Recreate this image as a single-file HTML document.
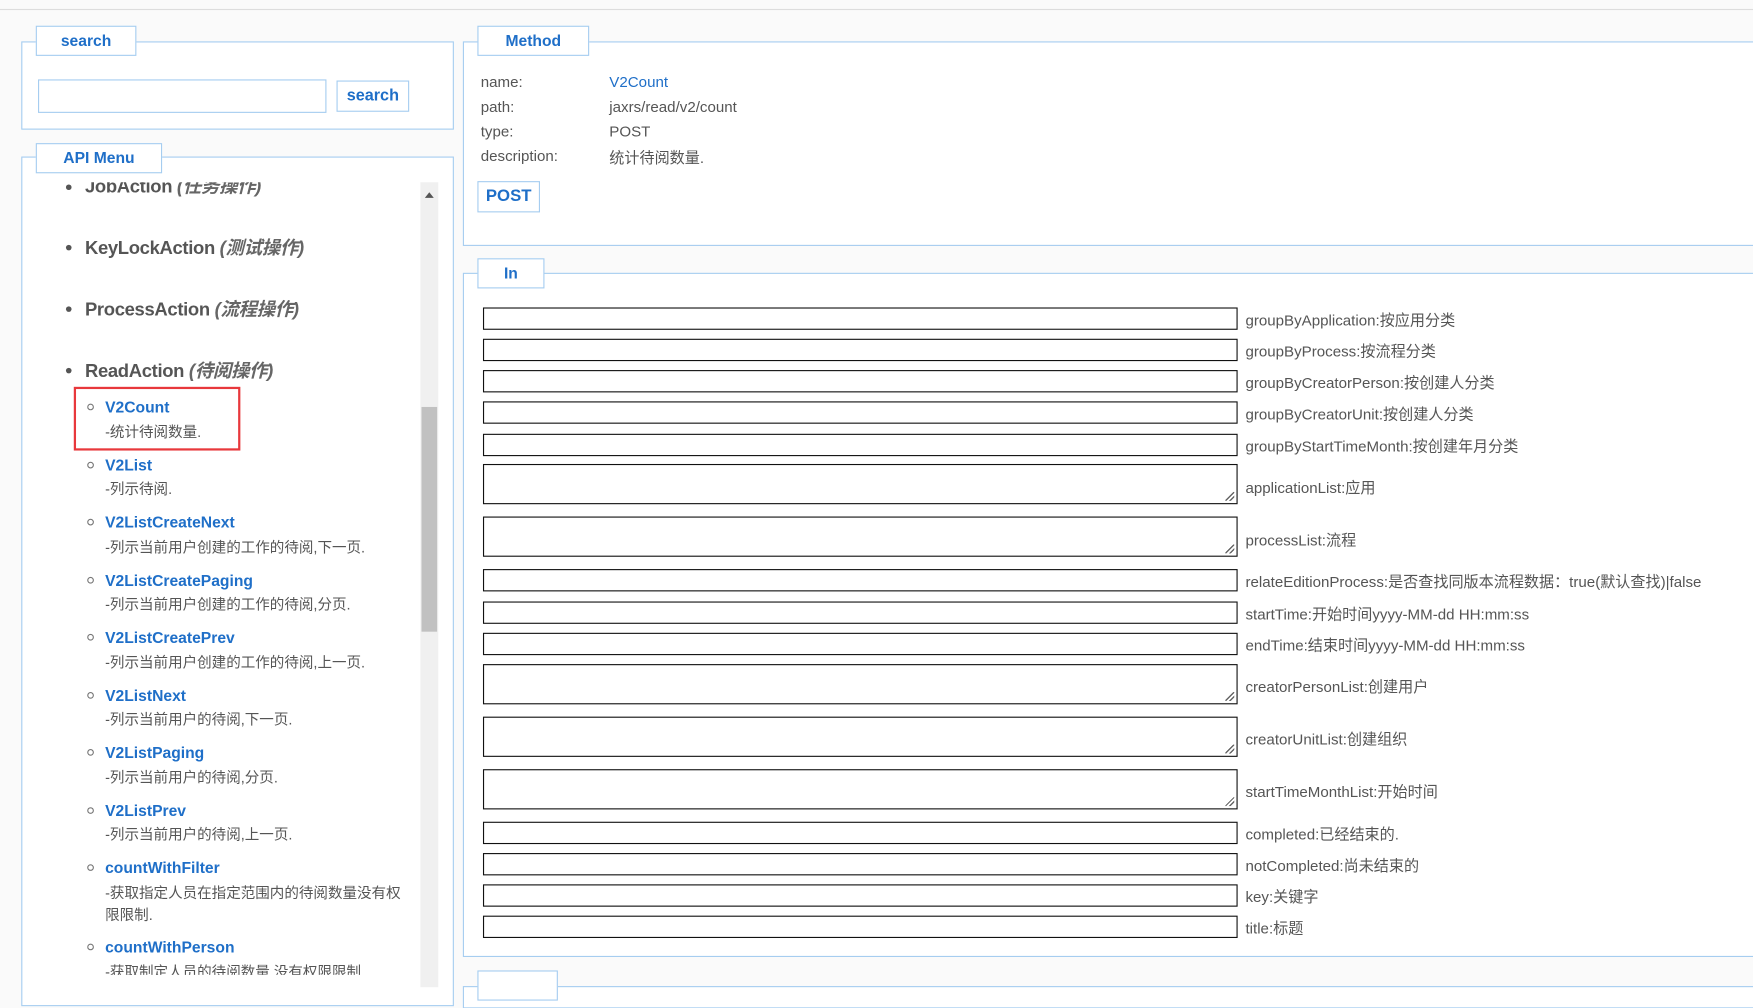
<!DOCTYPE html>
<html><head><meta charset="utf-8"><style>
html,body{margin:0;padding:0;width:1753px;height:975px;overflow:hidden;background:#fafafa}
#w{position:absolute;left:0;top:0;width:1568px;height:872px;transform:scale(1.118);transform-origin:0 0;font-family:"Liberation Sans","Noto Sans CJK SC",sans-serif;color:#555}
.a{position:absolute;box-sizing:border-box}
.fs{border:1px solid #a6cdf0;background:#fff}
.lg{border:1px solid #a6cdf0;background:#fff;color:#1f6fc8;font-weight:bold;font-size:14px;text-align:center;line-height:24px}
.t{position:absolute;white-space:nowrap}
.inp{position:absolute;left:432px;width:675px;border:1px solid #111;box-sizing:border-box;background:#fff}
.lab{position:absolute;left:1114px;font-size:13.5px;color:#555;white-space:nowrap}
.h{font-size:16.5px;font-weight:bold;color:#555;letter-spacing:-0.3px}
.h i{color:#666}
.dot{position:absolute;width:5px;height:5px;border-radius:50%;background:#555}
.cir{position:absolute;width:4px;height:4px;border-radius:50%;border:1px solid #777}
.lk{font-size:14px;font-weight:bold;color:#1f6fc8}
.ds{font-size:13px;color:#555}
.rz{position:absolute;right:2px;bottom:2px;width:8px;height:8px;background:linear-gradient(135deg,transparent 45%,#666 45%,#666 55%,transparent 55%,transparent 70%,#666 70%,#666 80%,transparent 80%)}
</style></head><body><div id="w">
<div class="a" style="left:0;top:8px;width:1568px;height:1px;background:#ddd"></div>

<div class="a fs" style="left:19px;top:37px;width:387px;height:79px"></div>
<div class="a lg" style="left:32px;top:23px;width:90px;height:27px">search</div>
<div class="a" style="left:34px;top:71px;width:258px;height:30px;border:1px solid #a6cdf0;background:#fff"></div>
<div class="a lg" style="left:301px;top:72px;width:65px;height:28px;line-height:26px;font-size:14.5px">search</div>

<div class="a fs" style="left:19px;top:140px;width:387px;height:760px"></div>
<div class="a lg" style="left:32px;top:128px;width:113px;height:27px">API Menu</div>
<div class="a" style="left:22px;top:163px;width:352px;height:709px;overflow:hidden">
  <div class="dot" style="left:37px;top:2px"></div><div class="t h" style="left:54px;top:-10px">JobAction <i>(任务操作)</i></div>
  <div class="dot" style="left:37px;top:56px"></div><div class="t h" style="left:54px;top:45px">KeyLockAction <i>(测试操作)</i></div>
  <div class="dot" style="left:37px;top:111px"></div><div class="t h" style="left:54px;top:100px">ProcessAction <i>(流程操作)</i></div>
  <div class="dot" style="left:37px;top:166px"></div><div class="t h" style="left:54px;top:155px">ReadAction <i>(待阅操作)</i></div>
<div class="cir" style="left:56px;top:198px"></div><div class="t lk" style="left:72px;top:193px">V2Count</div><div class="t ds" style="left:72px;top:213px">-统计待阅数量.</div>
<div class="cir" style="left:56px;top:250px"></div><div class="t lk" style="left:72px;top:245px">V2List</div><div class="t ds" style="left:72px;top:264px">-列示待阅.</div>
<div class="cir" style="left:56px;top:301px"></div><div class="t lk" style="left:72px;top:296px">V2ListCreateNext</div><div class="t ds" style="left:72px;top:316px">-列示当前用户创建的工作的待阅,下一页.</div>
<div class="cir" style="left:56px;top:353px"></div><div class="t lk" style="left:72px;top:348px">V2ListCreatePaging</div><div class="t ds" style="left:72px;top:367px">-列示当前用户创建的工作的待阅,分页.</div>
<div class="cir" style="left:56px;top:404px"></div><div class="t lk" style="left:72px;top:399px">V2ListCreatePrev</div><div class="t ds" style="left:72px;top:419px">-列示当前用户创建的工作的待阅,上一页.</div>
<div class="cir" style="left:56px;top:456px"></div><div class="t lk" style="left:72px;top:451px">V2ListNext</div><div class="t ds" style="left:72px;top:470px">-列示当前用户的待阅,下一页.</div>
<div class="cir" style="left:56px;top:507px"></div><div class="t lk" style="left:72px;top:502px">V2ListPaging</div><div class="t ds" style="left:72px;top:522px">-列示当前用户的待阅,分页.</div>
<div class="cir" style="left:56px;top:559px"></div><div class="t lk" style="left:72px;top:554px">V2ListPrev</div><div class="t ds" style="left:72px;top:573px">-列示当前用户的待阅,上一页.</div>
<div class="cir" style="left:56px;top:610px"></div><div class="t lk" style="left:72px;top:605px">countWithFilter</div><div class="t ds" style="left:72px;top:625px">-获取指定人员在指定范围内的待阅数量没有权</div><div class="t ds" style="left:72px;top:645px">限限制.</div>
<div class="cir" style="left:56px;top:681px"></div><div class="t lk" style="left:72px;top:676px">countWithPerson</div><div class="t ds" style="left:72px;top:696px">-获取制定人员的待阅数量,没有权限限制.</div>
</div>
<div class="a" style="left:66px;top:346px;width:149px;height:57px;border:2px solid #e8383c"></div>
<div class="a" style="left:376px;top:163px;width:16px;height:720px;background:#f0f0f0"></div>
<div class="a" style="left:377px;top:364px;width:14px;height:201px;background:#c1c1c1"></div>
<div class="a" style="left:380px;top:172px;width:0;height:0;border-left:4px solid transparent;border-right:4px solid transparent;border-bottom:5px solid #555"></div>

<div class="a fs" style="left:414px;top:37px;width:1160px;height:183px"></div>
<div class="a lg" style="left:427px;top:23px;width:100px;height:27px">Method</div>
<div class="t" style="left:430px;top:66px;font-size:13.5px">name:</div><div class="t" style="left:545px;top:66px;font-size:13.5px;color:#1f6fc8">V2Count</div>
<div class="t" style="left:430px;top:88px;font-size:13.5px">path:</div><div class="t" style="left:545px;top:88px;font-size:13.5px">jaxrs/read/v2/count</div>
<div class="t" style="left:430px;top:110px;font-size:13.5px">type:</div><div class="t" style="left:545px;top:110px;font-size:13.5px">POST</div>
<div class="t" style="left:430px;top:132px;font-size:13.5px">description:</div><div class="t" style="left:545px;top:130px;font-size:13.5px">统计待阅数量.</div>
<div class="a lg" style="left:427px;top:162px;width:56px;height:28px;line-height:26px;font-size:15px">POST</div>

<div class="a fs" style="left:414px;top:244px;width:1160px;height:612px"></div>
<div class="a lg" style="left:427px;top:231px;width:60px;height:27px">In</div>

<div class="inp" style="top:275px;height:20px"></div><div class="lab" style="top:275px">groupByApplication:按应用分类</div>
<div class="inp" style="top:303px;height:20px"></div><div class="lab" style="top:303px">groupByProcess:按流程分类</div>
<div class="inp" style="top:331px;height:20px"></div><div class="lab" style="top:331px">groupByCreatorPerson:按创建人分类</div>
<div class="inp" style="top:359px;height:20px"></div><div class="lab" style="top:359px">groupByCreatorUnit:按创建人分类</div>
<div class="inp" style="top:388px;height:20px"></div><div class="lab" style="top:388px">groupByStartTimeMonth:按创建年月分类</div>
<div class="inp" style="top:415px;height:36px"><div class="rz"></div></div><div class="lab" style="top:425px">applicationList:应用</div>
<div class="inp" style="top:462px;height:36px"><div class="rz"></div></div><div class="lab" style="top:472px">processList:流程</div>
<div class="inp" style="top:509px;height:20px"></div><div class="lab" style="top:509px">relateEditionProcess:是否查找同版本流程数据：true(默认查找)|false</div>
<div class="inp" style="top:538px;height:20px"></div><div class="lab" style="top:538px">startTime:开始时间yyyy-MM-dd HH:mm:ss</div>
<div class="inp" style="top:566px;height:20px"></div><div class="lab" style="top:566px">endTime:结束时间yyyy-MM-dd HH:mm:ss</div>
<div class="inp" style="top:594px;height:36px"><div class="rz"></div></div><div class="lab" style="top:603px">creatorPersonList:创建用户</div>
<div class="inp" style="top:641px;height:36px"><div class="rz"></div></div><div class="lab" style="top:650px">creatorUnitList:创建组织</div>
<div class="inp" style="top:688px;height:36px"><div class="rz"></div></div><div class="lab" style="top:697px">startTimeMonthList:开始时间</div>
<div class="inp" style="top:735px;height:20px"></div><div class="lab" style="top:735px">completed:已经结束的.</div>
<div class="inp" style="top:763px;height:20px"></div><div class="lab" style="top:763px">notCompleted:尚未结束的</div>
<div class="inp" style="top:791px;height:20px"></div><div class="lab" style="top:791px">key:关键字</div>
<div class="inp" style="top:819px;height:20px"></div><div class="lab" style="top:819px">title:标题</div>

<div class="a fs" style="left:414px;top:882px;width:1160px;height:20px"></div>
<div class="a lg" style="left:427px;top:868px;width:72px;height:27px"></div>
</div></body></html>
